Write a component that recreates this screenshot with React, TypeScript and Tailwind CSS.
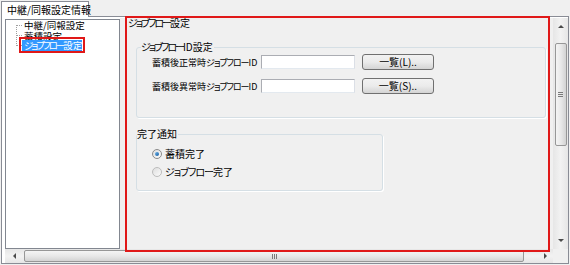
import { Fragment } from "react";

const FONT =
  "font-['Noto_Sans_CJK_JP','Noto_Sans',sans-serif] [font-feature-settings:'palt']";

// katakana runs are set tighter, like the narrow kana of the original UI font
const Jp = ({ text, tight = true }: { text: string; tight?: boolean }) => (
  <>
    {text.split(/([ァ-ヶー]+)/).map((part, i) =>
      /^[ァ-ヶー]+$/.test(part) ? (
        <span key={i} className={tight ? "tracking-[-2px]" : "tracking-[-1px]"}>
          {part}
        </span>
      ) : (
        <Fragment key={i}>{part}</Fragment>
      )
    )}
  </>
);

const Arrow = ({ dir }: { dir: "up" | "down" | "left" | "right" }) => {
  const pts = {
    up: "0,4 3,1 6,4",
    down: "0,1 3,4 6,1",
    left: "4,0 1,3 4,6",
    right: "1,0 4,3 1,6",
  }[dir];
  const vertical = dir === "up" || dir === "down";
  return (
    <svg width={vertical ? 6 : 5} height={vertical ? 5 : 6}>
      <polygon points={pts} fill="#4a4a4a" />
    </svg>
  );
};

const Radio = ({ checked }: { checked?: boolean }) => (
  <span
    className={`flex h-[10px] w-[10px] items-center justify-center rounded-full border ${
      checked ? "border-[#8b8b8b]" : "border-[#bcbcbc]"
    } bg-gradient-to-br from-[#dedede] to-[#fbfbfb]`}
  >
    {checked && (
      <span className="h-[4px] w-[4px] rounded-full bg-gradient-to-br from-[#6fb6ea] to-[#0d5aa0]" />
    )}
  </span>
);

const idRows = [
  { label: "蓄積後正常時ジョブフローID", button: "一覧(L).." },
  { label: "蓄積後異常時ジョブフローID", button: "一覧(S).." },
];

const TreeLines = () => (
  <svg width="16" height="31" className="shrink-0">
    <g stroke="#a0a0a0" strokeDasharray="1 1">
      <line x1="10.5" y1="5" x2="10.5" y2="26" />
      <line x1="11" y1="5.5" x2="16" y2="5.5" />
      <line x1="11" y1="15.5" x2="16" y2="15.5" />
      <line x1="11" y1="25.5" x2="16" y2="25.5" />
    </g>
  </svg>
);

export default function App() {
  return (
    <div
      className={`relative h-[265px] w-[570px] overflow-hidden whitespace-nowrap bg-[#f0f0f0] text-[10px] text-black ${FONT}`}
    >
      {/* tab */}
      <div className="flex h-[16px] pl-[1px] pt-[1px]">
        <div className="relative z-10 -mb-px flex h-[16px] w-[88px] items-center border border-b-0 border-[#898c95] bg-white pl-[5px] leading-none">
          中継/同報設定情報
        </div>
      </div>

      {/* pane */}
      <div className="mx-[1px] flex h-[248px] flex-col border border-[#898c95] bg-white">
        <div className="flex h-[232px] pl-[3px] pt-[1px]">
          {/* tree */}
          <div className="mt-[1px] h-[230px] w-[115px] border border-[#828790] bg-white text-[9.5px]">
            <div className="flex">
              <TreeLines />
              <div className="flex flex-col items-start">
                <div className="h-[10px] pl-[2px] leading-[10px]">中継/同報設定</div>
                <div className="h-[10px] pl-[2px] leading-[12px]">蓄積設定</div>
                <div className="relative h-[11px] w-[60px] bg-[#3399ff] pl-[2px] leading-[11px] text-white">
                  <Jp text="ジョブフロー設定" />
                </div>
              </div>
            </div>
          </div>

          {/* settings panel */}
          <div className="w-[433px] bg-[#f0f0f0]">
            <div className="h-[10px] pl-[8px] leading-[10px]">
              <Jp text="ジョブフロー設定" />
            </div>

            <div className="ml-[16px] mt-[19px] h-[71px] w-[410px] rounded-[3px] border border-[#d5dfe5] shadow-[1px_1px_0_#ffffff]">
              <div className="-mt-[6px] ml-[4px] h-[10px] w-fit bg-[#f0f0f0] pr-[1px] leading-[10px]">
                <Jp text="ジョブフローID設定" />
              </div>
              <div className="flex flex-col gap-[8px] pl-[15px] pt-[2px]">
                {idRows.map((row) => (
                  <div key={row.label} className="flex h-[16px] items-center">
                    <span className="w-[109px] text-[9px] leading-none">
                      <Jp text={row.label} tight={false} />
                    </span>
                    <span className="h-[14px] w-[94px] border border-[#abadb3] border-b-[#e3e9ef] border-r-[#dbdfe6] bg-white" />
                    <button className="ml-[7px] flex h-[16px] w-[72px] items-center justify-center rounded-[3px] border border-[#707070] bg-gradient-to-b from-[#f2f2f2] via-[#ebebeb] to-[#d4d4d4] leading-none">
                      {row.button}
                    </button>
                  </div>
                ))}
              </div>
            </div>

            <div className="ml-[16px] mt-[16px] h-[57px] w-[247px] rounded-[3px] border border-[#d5dfe5] shadow-[1px_1px_0_#ffffff]">
              <div className="-mt-[6px] h-[10px] w-fit bg-[#f0f0f0] pr-[1px] leading-[10px]">
                完了通知
              </div>
              <div className="flex flex-col gap-[4px] pl-[15px] pt-[8px]">
                <div className="flex h-[14px] items-center gap-[3px]">
                  <Radio checked />
                  <span className="leading-none">蓄積完了</span>
                </div>
                <div className="flex h-[14px] items-center gap-[3px]">
                  <Radio />
                  <span className="leading-none">
                    <Jp text="ジョブフロー完了" tight={false} />
                  </span>
                </div>
              </div>
            </div>
          </div>

          {/* vertical scrollbar */}
          <div className="flex w-[15px] flex-col items-center bg-gradient-to-r from-[#e6e6e6] via-[#f2f2f2] to-[#e6e6e6]">
            <div className="flex h-[16px] w-full items-center justify-center pt-[1px]">
              <Arrow dir="up" />
            </div>
            <div className="mt-[9px] flex h-[103px] w-[12px] items-center justify-center rounded-[2px] border border-[#979797] bg-gradient-to-r from-[#f4f4f4] via-[#e8e8e8] to-[#d3d3d3]">
              <div className="flex flex-col gap-[1px]">
                <span className="h-px w-[5px] bg-[#7a7a7a]" />
                <span className="h-px w-[5px] bg-[#7a7a7a]" />
                <span className="h-px w-[5px] bg-[#7a7a7a]" />
              </div>
            </div>
            <div className="flex-1" />
            <div className="flex h-[16px] w-full items-center justify-center pb-[2px]">
              <Arrow dir="down" />
            </div>
          </div>
        </div>

        {/* horizontal scrollbar */}
        <div className="flex h-[14px] pl-[3px]">
          <div className="flex w-[548px] items-center bg-gradient-to-b from-[#e6e6e6] via-[#f2f2f2] to-[#e6e6e6]">
            <div className="flex w-[19px] items-center justify-center">
              <Arrow dir="left" />
            </div>
            <div className="flex h-[12px] w-[500px] items-center justify-center rounded-[2px] border border-[#979797] bg-gradient-to-b from-[#f4f4f4] via-[#e8e8e8] to-[#d3d3d3]">
              <div className="flex gap-[1px]">
                <span className="h-[5px] w-px bg-[#7a7a7a]" />
                <span className="h-[5px] w-px bg-[#7a7a7a]" />
                <span className="h-[5px] w-px bg-[#7a7a7a]" />
              </div>
            </div>
            <div className="flex flex-1 items-center justify-end pr-[5px]">
              <Arrow dir="right" />
            </div>
          </div>
          <div className="w-[15px] bg-[#f0f0f0]" />
        </div>
      </div>

      {/* annotation boxes */}
      <div className="pointer-events-none absolute left-[125px] top-[16px] h-[236px] w-[425px] border-2 border-[#e01818]" />
      <div className="pointer-events-none absolute left-[19px] top-[37px] h-[16px] w-[66px] border-2 border-[#e01818]" />
    </div>
  );
}
